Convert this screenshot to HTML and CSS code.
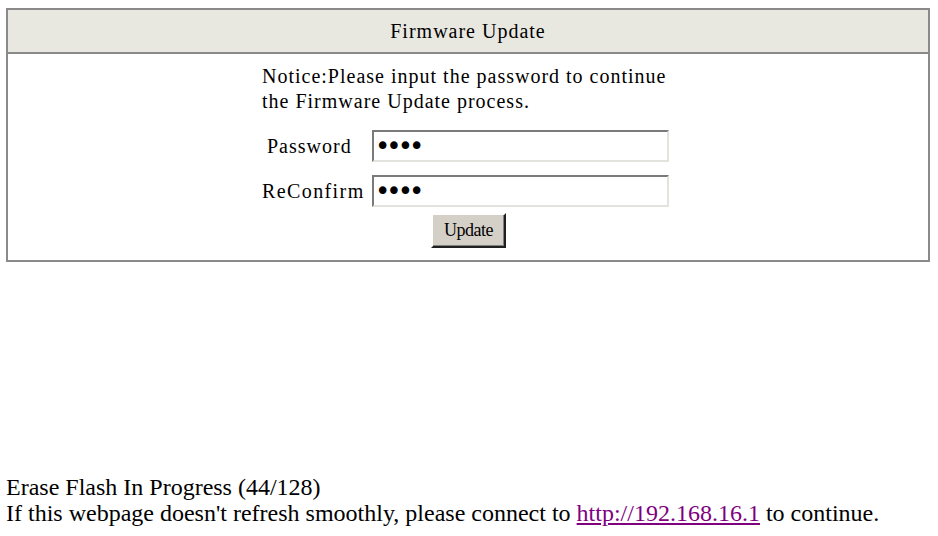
FILE: index.html
```html
<!DOCTYPE html>
<html>
<head>
<meta charset="utf-8">
<title>Firmware Update</title>
<link rel="stylesheet" href="styles.css">
</head>
<body>
<div class="panel">
  <div class="panel-head">Firmware Update</div>
  <div class="panel-body">
    <div class="form-block">
      <p class="notice">Notice:Please input the password to continue<br>the Firmware Update process.</p>
      <div class="row">
        <label class="lbl lbl-pw" for="pw">Password</label>
        <input class="field" id="pw" type="password" value="1234">
      </div>
      <div class="row row-2">
        <label class="lbl" for="pw2">ReConfirm</label>
        <input class="field" id="pw2" type="password" value="1234">
      </div>
      <div class="btn-row">
        <button class="btn" type="button">Update</button>
      </div>
    </div>
  </div>
</div>
<div class="status">
  <div>Erase Flash In Progress (44/128)</div>
  <div>If this webpage doesn't refresh smoothly, please connect to <a class="link" href="#">http://192.168.16.1</a> to continue.</div>
</div>
</body>
</html>
```

FILE: styles.css
```css
html, body {
  background: #ffffff;
}
body {
  margin: 0;
  padding: 8px 8px 0 6px;
  color: #000;
}
.panel {
  width: 920px;
  border: 2px solid #8a8a8a;
  font-family: "Liberation Serif", serif;
  font-size: 20px;
  letter-spacing: 1px;
}
.panel-head {
  height: 42px;
  background: #e8e8e0;
  border-bottom: 2px solid #8a8a8a;
  display: flex;
  align-items: center;
  justify-content: center;
}
.panel-body {
  padding: 10px 5px 12px 0;
}
.form-block {
  width: 407px;
  margin: 0 auto;
}
.notice {
  margin: 0;
  line-height: 25px;
}
.row {
  display: flex;
  align-items: center;
  margin-top: 16px;
}
.row-2 {
  margin-top: 13px;
}
.lbl {
  width: 110px;
  letter-spacing: 1.4px;
}
.lbl-pw {
  padding-left: 5px;
  width: 105px;
  letter-spacing: 1px;
}
.field {
  box-sizing: border-box;
  width: 297px;
  height: 32px;
  margin: 0;
  padding: 0 1px;
  border-style: solid;
  border-width: 2px;
  border-color: #7a7a7a #e4e2dc #e4e2dc #7a7a7a;
  background: #fff;
  font-family: "DejaVu Sans", sans-serif;
  font-size: 26px;
  letter-spacing: -4px;
  color: #000;
  outline: none;
}
.btn-row {
  display: flex;
  justify-content: center;
  margin-top: 6px;
  padding-left: 6px;
}
.btn {
  box-sizing: border-box;
  width: 75px;
  height: 35px;
  margin: 0;
  padding: 0;
  background: #d4d0c8;
  border-style: solid;
  border-width: 2px;
  border-color: #ffffff #202020 #202020 #ffffff;
  box-shadow: inset -1px -1px 0 #808080;
  font-family: "Liberation Serif", serif;
  font-size: 18px;
  letter-spacing: -0.5px;
  color: #000;
}
.status {
  margin-top: 212px;
  font-family: "Liberation Serif", serif;
  font-size: 24px;
  line-height: 26px;
}
.link {
  color: #800080;
}
```
